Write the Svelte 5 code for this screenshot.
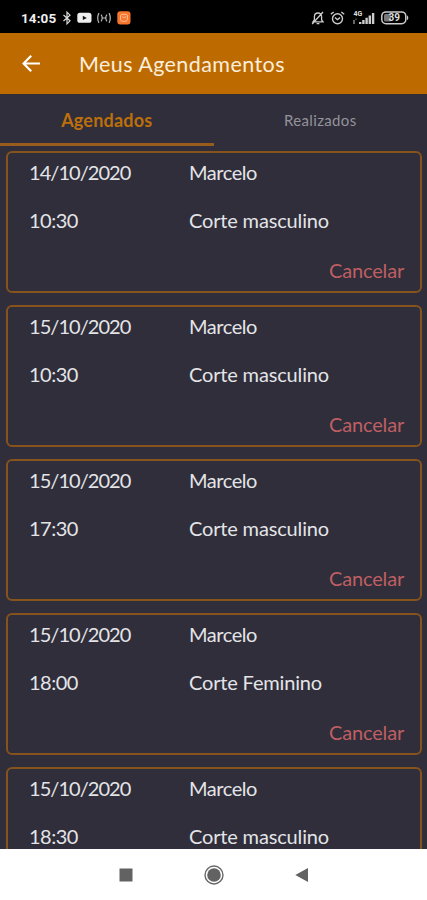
<script>
  let activeTab = $state('Agendados');

  const tabs = ['Agendados', 'Realizados'];

  let appointments = $state([
    { id: 1, date: '14/10/2020', time: '10:30', barber: 'Marcelo', service: 'Corte masculino' },
    { id: 2, date: '15/10/2020', time: '10:30', barber: 'Marcelo', service: 'Corte masculino' },
    { id: 3, date: '15/10/2020', time: '17:30', barber: 'Marcelo', service: 'Corte masculino' },
    { id: 4, date: '15/10/2020', time: '18:00', barber: 'Marcelo', service: 'Corte Feminino' },
    { id: 5, date: '15/10/2020', time: '18:30', barber: 'Marcelo', service: 'Corte masculino' }
  ]);

  function cancel(id) {
    appointments = appointments.filter((a) => a.id !== id);
  }
</script>

<div class="screen">
  <div class="status-bar">
    <div class="status-left">
      <span class="clock">14:05</span>
      <!-- bluetooth -->
      <svg class="bluetooth" width="10" height="14" viewBox="0 0 10 14">
        <path d="M1.5 4 8 9.8 5 12.8V1.2L8 4.2 1.5 10" fill="none" stroke="#ddd" stroke-width="1.2" />
      </svg>
      <!-- video -->
      <svg class="video" width="15" height="12" viewBox="0 0 15 12">
        <rect x="0.3" y="0.8" width="14.2" height="10" rx="2.6" fill="#eee" />
        <path d="M5.8 3.7v4.4l4-2.2z" fill="#111" />
      </svg>
      <!-- hotspot -->
      <svg class="hotspot" width="14" height="12" viewBox="0 0 14 12">
        <g fill="none" stroke="#bbb" stroke-width="1.2">
          <path d="M2 1.2C.3 3.6.3 8.4 2 10.8M12 1.2c1.7 2.4 1.7 7.2 0 9.6" />
          <path d="M4 2.6c1.6 1.8 1.6 5 0 6.8M10 2.6c-1.6 1.8-1.6 5 0 6.8M5 6h4" />
        </g>
      </svg>
      <!-- delivery app -->
      <svg width="14" height="14" viewBox="0 0 14 14">
        <rect x="0.3" y="0.3" width="13.2" height="13.2" rx="3" fill="#f7762b" />
        <path d="M3.5 4.2C4 3 10 3 10.4 4.2v4.6C10 11 4 11 3.5 8.8zM5.2 5.8l1.5.8 2.5-.8" fill="none" stroke="#ffc09a" stroke-width="1" />
      </svg>
    </div>
    <div class="status-right">
      <!-- muted bell -->
      <svg class="bell" width="14" height="14" viewBox="0 0 14 14">
        <path d="M2 10.8h10L10.6 9V5.7C10.6 3.4 9.2 2 7 2S3.4 3.4 3.4 5.7V9zM5.6 12.6h2.8M12 1 1.2 13" fill="none" stroke="#ccc" stroke-width="1.3" />
      </svg>
      <!-- alarm -->
      <svg class="alarm" width="15" height="14" viewBox="0 0 15 14">
        <g fill="none" stroke="#ccc" stroke-width="1.4">
          <circle cx="7.5" cy="7.7" r="5" />
          <path d="M.8 3.3 3.7 1M14.2 3.3 11.3 1M5 6.5l2.4 2.2L10 6.6" />
        </g>
      </svg>
      <!-- signal -->
      <svg class="signal" width="23" height="14" viewBox="0 0 23 14">
        <text x="0.5" y="5.4" class="network">4G</text>
        <path d="M0 9h2v4H0zM2.4 7.5h1.3V9H2.4z" fill="#666" />
        <path d="M6 11h2.4v2H6zM9.2 9h2.4v4H9.2zM12.4 6.7h2.4V13h-2.4zM15.6 4.5H18V13h-2.4zM18.9 2h2.4v11h-2.4z" fill="#ccc" />
      </svg>
      <!-- battery -->
      <svg width="28" height="14" viewBox="0 0 28 14">
        <rect x="0.8" y="0.9" width="24" height="11.8" rx="4.2" fill="none" stroke="#ccc" stroke-width="1.5" />
        <rect x="3" y="3" width="7" height="7.6" rx="1.5" fill="#777" />
        <path d="M26 4.5c1.7.7 1.7 4 0 4.7z" fill="#ccc" />
        <text x="7.5" y="10.4" class="charge">39</text>
      </svg>
    </div>
  </div>

  <header class="app-bar">
    <button class="back" aria-label="Voltar">
      <svg width="20" height="20" viewBox="0 0 20 20">
        <path d="M19 9.5H2.8M10.2 1.8 2.6 9.5l7.6 7.7" fill="none" stroke="#fff" stroke-width="2.2" />
      </svg>
    </button>
    <h1>Meus Agendamentos</h1>
  </header>

  <nav class="tabs">
    {#each tabs as tab}
      <button class="tab" class:active={activeTab === tab} onclick={() => (activeTab = tab)}>
        <span>{tab}</span>
      </button>
    {/each}
  </nav>

  <main class="list">
    {#each appointments as item (item.id)}
      <article class="card">
        <div class="row">
          <span class="when date">{item.date}</span>
          <span class="name">{item.barber}</span>
        </div>
        <div class="row">
          <span class="when time">{item.time}</span>
          <span class="service">{item.service}</span>
        </div>
        <button class="cancel" onclick={() => cancel(item.id)}>Cancelar</button>
      </article>
    {/each}
  </main>

  <footer class="nav-bar">
    <svg width="14" height="14" viewBox="0 0 14 14">
      <rect x="0.5" y="0.5" width="13" height="13" fill="#626262" />
    </svg>
    <svg width="20" height="20" viewBox="0 0 20 20">
      <circle cx="10" cy="10" r="9" fill="none" stroke="#686868" stroke-width="1.4" />
      <circle cx="10" cy="10" r="6.8" fill="#626262" />
    </svg>
    <svg width="14" height="16" viewBox="0 0 14 16">
      <path d="M13 1v14L.3 8z" fill="#626262" />
    </svg>
  </footer>
</div>

<style>
  :global(body) {
    background: #2f2e3a;
  }

  .screen {
    display: flex;
    flex-direction: column;
    width: 427px;
    height: 900px;
    overflow: hidden;
    background: #2f2e3a;
    font-family: Lato, 'Open Sans', sans-serif;
    color: #e4e4e8;
  }

  button {
    margin: 0;
    padding: 0;
    border: none;
    background: none;
    font: inherit;
    color: inherit;
    cursor: pointer;
  }

  svg {
    display: block;
    flex: none;
  }

  /* Status bar */
  .status-bar {
    display: flex;
    flex: none;
    justify-content: space-between;
    box-sizing: border-box;
    height: 33px;
    padding: 3px 18px 0 21px;
    background: #000;
  }

  .status-left,
  .status-right {
    display: flex;
    align-items: center;
  }

  .clock {
    width: 41px;
    font-family: Roboto, sans-serif;
    font-size: 13.5px;
    font-weight: 700;
    letter-spacing: 0.1px;
    color: #eee;
  }

  .bluetooth {
    margin-right: 5px;
  }

  .video {
    margin-right: 5px;
  }

  .hotspot {
    margin-right: 6px;
  }

  .bell {
    margin-right: 5px;
  }

  .alarm {
    margin-right: 8px;
  }

  .signal {
    margin-right: 5px;
  }

  .network,
  .charge {
    font-family: Roboto, sans-serif;
    font-weight: 700;
    fill: #ddd;
  }

  .network {
    font-size: 7px;
  }

  .charge {
    font-size: 10px;
  }

  /* App bar */
  .app-bar {
    display: flex;
    flex: none;
    align-items: center;
    height: 61px;
    padding-left: 21px;
    background: #bd6b00;
  }

  .back {
    margin-right: 38px;
  }

  h1 {
    margin: 0;
    padding-top: 1px;
    font-size: 21.5px;
    font-weight: 400;
    line-height: 28px;
    letter-spacing: 0.42px;
    color: #fbeedd;
    white-space: nowrap;
  }

  /* Tabs */
  .tabs {
    display: flex;
    flex: none;
    height: 52px;
  }

  .tab {
    flex: 1;
    box-sizing: border-box;
    padding-top: 3px;
    border-bottom: 3px solid transparent;
    font-size: 15px;
    letter-spacing: 0.35px;
    color: #94939b;
  }

  .tab.active {
    border-bottom-color: #985d1c;
    font-size: 18px;
    font-weight: 700;
    letter-spacing: 0.2px;
    color: #bd6f0b;
  }

  /* Appointments */
  .list {
    display: flex;
    flex: 1;
    flex-direction: column;
    gap: 12px;
    min-height: 0;
    padding: 5px 5px 0 6px;
    overflow: hidden;
  }

  .card {
    display: flex;
    flex: none;
    flex-direction: column;
    box-sizing: border-box;
    height: 142px;
    padding: 7px 16px 0 21px;
    border: 2px solid #85531b;
    border-radius: 6px;
  }

  .row {
    display: flex;
    height: 24px;
    margin-bottom: 24px;
    font-size: 20px;
    line-height: 24px;
  }

  .when {
    width: 160px;
  }

  .date {
    letter-spacing: -0.95px;
  }

  .time {
    letter-spacing: -0.5px;
  }

  .name {
    letter-spacing: -0.45px;
  }

  .service {
    letter-spacing: -0.16px;
  }

  .cancel {
    align-self: flex-end;
    margin-top: 2px;
    font-size: 20px;
    line-height: 24px;
    letter-spacing: -0.18px;
    color: #bf5f63;
  }

  /* System navigation */
  .nav-bar {
    display: flex;
    flex: none;
    align-items: center;
    justify-content: center;
    gap: 71px;
    height: 51px;
    background: #fff;
  }
</style>
